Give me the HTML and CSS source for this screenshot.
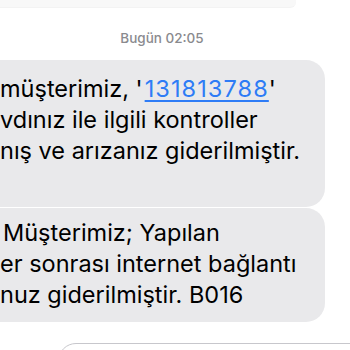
FILE: index.html
```html
<!DOCTYPE html>
<html lang="tr">
<head>
<meta charset="utf-8">
<link rel="stylesheet" href="styles.css">
</head>
<body>
<div class="screen">
  <div class="ghost"></div>
  <div class="stamp">Bugün 02:05</div>
  <div class="bubble first">
    <div class="line">müşterimiz, '<span class="link">131813788</span>'</div>
    <div class="line">vdınız ile ilgili kontroller</div>
    <div class="line">nış ve arızanız giderilmiştir.</div>
    <div class="line">&nbsp;</div>
  </div>
  <div class="bubble second">
    <div class="line indent">Müşterimiz; Yapılan</div>
    <div class="line">er sonrası internet bağlantı</div>
    <div class="line">nuz giderilmiştir. B016</div>
  </div>
  <div class="input"></div>
</div>
</body>
</html>
```

FILE: styles.css
```css
html, body {
  margin: 0;
  padding: 0;
  background: #ffffff;
}
.screen {
  width: 350px;
  height: 350px;
  overflow: hidden;
  display: flex;
  flex-direction: column;
  font-family: "Inter", "Liberation Sans", sans-serif;
}
.ghost {
  width: 296px;
  height: 7px;
  background: #f8f8f8;
  border-bottom: 1px solid #f3f3f3;
  border-bottom-right-radius: 6px;
  flex: none;
}
.stamp {
  margin-top: 20px;
  text-align: center;
  margin-left: -26px;
  font-size: 13.5px;
  font-weight: 500;
  color: #8a8a8e;
  line-height: 20px;
  flex: none;
}
.bubble {
  flex: none;
  width: 365px;
  margin-left: -40px;
  padding-left: 40px;
  box-sizing: border-box;
  background: #e9e9eb;
  border-radius: 19px;
  color: #000;
  font-size: 23.5px;
  line-height: 31px;
  white-space: nowrap;
}
.bubble.first {
  margin-top: 12px;
  padding-top: 12.5px;
  padding-bottom: 10.5px;
}
.bubble.second {
  margin-top: 1px;
  padding-top: 8.5px;
  padding-bottom: 12.5px;
}
.indent {
  padding-left: 3px;
}
.link {
  color: #2e7cf6;
  text-decoration: underline;
  text-underline-offset: 3px;
  text-decoration-thickness: 1.5px;
  letter-spacing: 1.1px;
  margin-left: 2px;
}
.input {
  flex: none;
  margin-top: 21px;
  margin-left: 58px;
  width: 320px;
  height: 40px;
  border: 1px solid #c7c7cc;
  border-radius: 18px;
  background: #fff;
}
```
